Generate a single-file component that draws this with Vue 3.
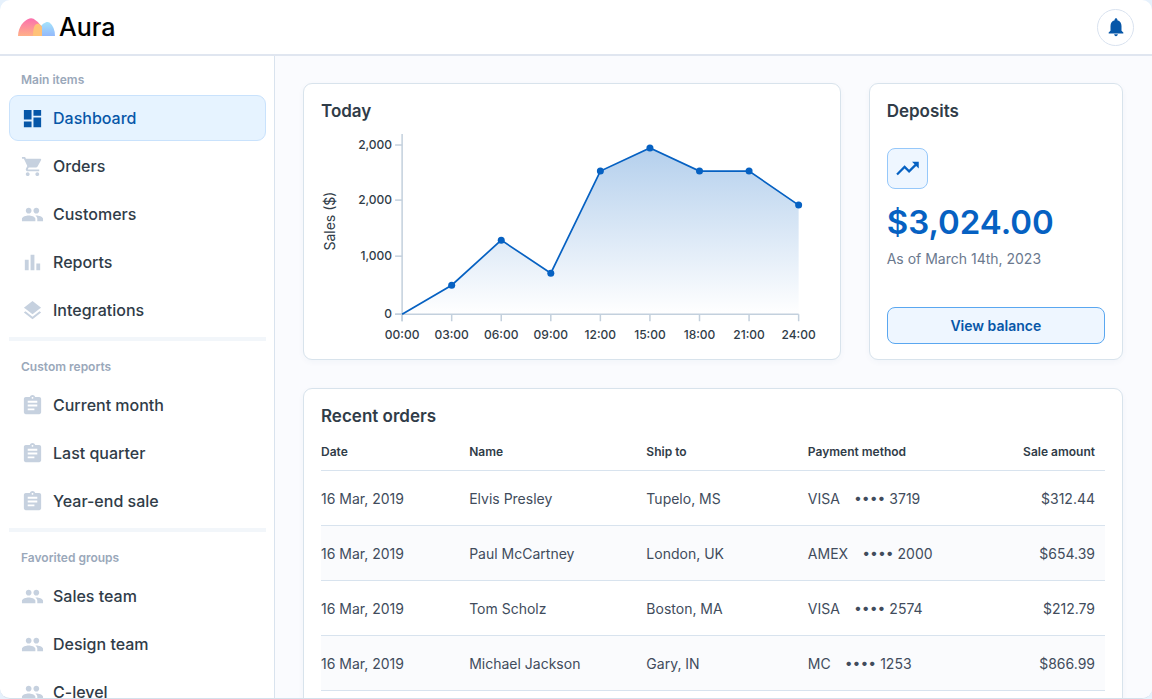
<script setup>
const people = 'M16 11c1.66 0 2.99-1.34 2.99-3S17.66 5 16 5s-3 1.34-3 3 1.34 3 3 3zm-8 0c1.66 0 2.99-1.34 2.99-3S9.66 5 8 5 5 6.34 5 8s1.34 3 3 3zm0 2c-2.33 0-7 1.17-7 3.5V19h14v-2.5c0-2.33-4.67-3.5-7-3.5zm8 0c-.29 0-.62.02-.97.05 1.16.84 1.97 1.97 1.97 3.45V19h6v-2.5c0-2.33-4.67-3.5-7-3.5z'
const clipboard = 'M19 3h-4.18C14.4 1.84 13.3 1 12 1s-2.4.84-2.82 2H5c-1.1 0-2 .9-2 2v14c0 1.1.9 2 2 2h14c1.1 0 2-.9 2-2V5c0-1.1-.9-2-2-2zm-7 0c.55 0 1 .45 1 1s-.45 1-1 1-1-.45-1-1 .45-1 1-1zm2 14H7v-2h7v2zm3-4H7v-2h10v2zm0-4H7V7h10v2z'

const groups = [
  {
    title: 'Main items',
    items: [
      { label: 'Dashboard', icon: 'M3 13h8V3H3v10zm0 8h8v-6H3v6zm10 0h8V11h-8v10zm0-18v6h8V3h-8z', active: true },
      { label: 'Orders', icon: 'M7 18c-1.1 0-1.99.9-1.99 2S5.9 22 7 22s2-.9 2-2-.9-2-2-2zM1 2v2h2l3.6 7.59-1.35 2.45c-.16.28-.25.61-.25.96 0 1.1.9 2 2 2h12v-2H7.42c-.14 0-.25-.11-.25-.25l.03-.12.9-1.63h7.45c.75 0 1.41-.41 1.75-1.03l3.58-6.49A1 1 0 0 0 20 4H5.21l-.94-2H1zm16 16c-1.1 0-1.99.9-1.99 2s.89 2 1.99 2 2-.9 2-2-.9-2-2-2z' },
      { label: 'Customers', icon: people },
      { label: 'Reports', icon: 'M4 9h4v11H4zM10 4h4v16h-4zM16 13h4v7h-4z' },
      { label: 'Integrations', icon: 'M11.99 18.54l-7.37-5.73L3 14.07l9 7 9-7-1.63-1.27-7.38 5.74zM12 16l7.36-5.73L21 9l-9-7-9 7 1.63 1.27L12 16z' },
    ],
  },
  {
    title: 'Custom reports',
    items: [
      { label: 'Current month', icon: clipboard },
      { label: 'Last quarter', icon: clipboard },
      { label: 'Year-end sale', icon: clipboard },
    ],
  },
  {
    title: 'Favorited groups',
    items: [
      { label: 'Sales team', icon: people },
      { label: 'Design team', icon: people },
      { label: 'C-level', icon: people },
    ],
  },
]

const hours = ['00:00', '03:00', '06:00', '09:00', '12:00', '15:00', '18:00', '21:00', '24:00']
const tickX = (i) => 81 + i * 49.5
const yTicks = [
  { label: '2,000', y: 15 },
  { label: '2,000', y: 70 },
  { label: '1,000', y: 126 },
  { label: '0', y: 184 },
]
const values = [184, 155, 110, 143, 41, 18, 41, 41, 75]
const points = values.map((y, i) => ({ x: tickX(i), y }))
const line = points.map((p) => `${p.x},${p.y}`).join(' ')
const area = `${line} ${tickX(8)},184`

const orders = [
  { date: '16 Mar, 2019', name: 'Elvis Presley', ship: 'Tupelo, MS', card: 'VISA', digits: '3719', amount: '$312.44' },
  { date: '16 Mar, 2019', name: 'Paul McCartney', ship: 'London, UK', card: 'AMEX', digits: '2000', amount: '$654.39' },
  { date: '16 Mar, 2019', name: 'Tom Scholz', ship: 'Boston, MA', card: 'VISA', digits: '2574', amount: '$212.79' },
  { date: '16 Mar, 2019', name: 'Michael Jackson', ship: 'Gary, IN', card: 'MC', digits: '1253', amount: '$866.99' },
]
</script>

<template>
  <div class="app">
    <header class="topbar">
      <a href="#" class="brand">
        <svg class="logo" viewBox="0 0 37 18" aria-hidden="true">
          <defs>
            <linearGradient id="pink" x1="0" y1="0" x2="0" y2="1">
              <stop offset="0" stop-color="#fb6fae" />
              <stop offset="1" stop-color="#ffb088" />
            </linearGradient>
            <linearGradient id="sky" x1="0" y1="0" x2="0" y2="1">
              <stop offset="0" stop-color="#a5e3fb" />
              <stop offset="1" stop-color="#93b9fb" />
            </linearGradient>
          </defs>
          <path d="M22 18V9Q25 5 28.500 4.100Q30 3.700 31.500 4.500Q37 9 37 18Z" fill="url(#sky)" />
          <path d="M0 18C.5 9 5 3 11.500 .5Q13.500 -.3 15.500 .8Q21 4 24 9V18Z" fill="url(#pink)" />
          <path d="M15 18C15 9 17 5.700 19.500 5.700C22 5.700 24 8 24 10V18Z" fill="#ffc278" />
        </svg>
        <span>Aura</span>
      </a>
      <button class="bell" type="button" aria-label="Notifications">
        <svg viewBox="0 0 24 24" aria-hidden="true">
          <path d="M12 22c1.100 0 2-.9 2-2h-4c0 1.100.9 2 2 2zm6-6v-5c0-3.070-1.630-5.640-4.500-6.320V4c0-.83-.67-1.500-1.500-1.500s-1.500.67-1.500 1.500v.68C7.640 5.360 6 7.920 6 11v5l-2 2v1h16v-1l-2-2z" />
        </svg>
      </button>
    </header>

    <div class="body">
      <nav class="sidebar">
        <section v-for="group in groups" :key="group.title" class="group">
          <h2>{{ group.title }}</h2>
          <ul>
            <li v-for="item in group.items" :key="item.label">
              <a href="#" :class="['item', { active: item.active }]">
                <svg viewBox="0 0 24 24" aria-hidden="true"><path :d="item.icon" /></svg>
                <span>{{ item.label }}</span>
              </a>
            </li>
          </ul>
        </section>
      </nav>

      <main class="content">
        <section class="card today">
          <h3>Today</h3>
          <svg class="chart" viewBox="0 0 501 214" role="img" aria-label="Sales today">
            <defs>
              <linearGradient id="fill" x1="0" y1="0" x2="0" y2="1">
                <stop offset="0" stop-color="#0661c2" stop-opacity="0.3" />
                <stop offset="1" stop-color="#0661c2" stop-opacity="0" />
              </linearGradient>
            </defs>
            <polygon :points="area" fill="url(#fill)" />
            <g class="axis">
              <path d="M81 4V191M74 184H477" />
              <path v-for="t in yTicks" :key="t.y" :d="`M74 ${t.y}H81`" />
              <path v-for="(h, i) in hours" :key="h" :d="`M${tickX(i)} 184V191`" />
            </g>
            <polyline :points="line" class="line" />
            <circle v-for="p in points.slice(1)" :key="p.x" :cx="p.x" :cy="p.y" r="3.500" class="dot" />
            <g class="ticks">
              <text v-for="t in yTicks" :key="t.y" x="71" :y="t.y + 4" text-anchor="end">{{ t.label }}</text>
              <text v-for="(h, i) in hours" :key="h" :x="tickX(i)" y="209" text-anchor="middle">{{ h }}</text>
            </g>
            <text class="axis-title" transform="translate(14 91) rotate(-90)" text-anchor="middle">Sales ($)</text>
          </svg>
        </section>

        <section class="card deposits">
          <h3>Deposits</h3>
          <div class="trend">
            <svg viewBox="0 0 24 24" aria-hidden="true">
              <path d="M16 6l2.290 2.290-4.880 4.880-4-4L2 16.590 3.410 18l6-6 4 4 6.300-6.290L22 12V6z" />
            </svg>
          </div>
          <p class="amount">$3,024.00</p>
          <p class="asof">As of March 14th, 2023</p>
          <button class="view" type="button">View balance</button>
        </section>

        <section class="card orders">
          <h3>Recent orders</h3>
          <table>
            <thead>
              <tr>
                <th class="c-date">Date</th>
                <th class="c-name">Name</th>
                <th class="c-ship">Ship to</th>
                <th class="c-pay">Payment method</th>
                <th class="num">Sale amount</th>
              </tr>
            </thead>
            <tbody>
              <tr v-for="o in orders" :key="o.name">
                <td>{{ o.date }}</td>
                <td>{{ o.name }}</td>
                <td>{{ o.ship }}</td>
                <td><span class="brand-name">{{ o.card }}</span>•••• {{ o.digits }}</td>
                <td class="num">{{ o.amount }}</td>
              </tr>
            </tbody>
          </table>
        </section>
      </main>
    </div>
  </div>
</template>

<style>
body {
  background: #e6f1fc;
}
</style>

<style scoped>
.app {
  display: flex;
  flex-direction: column;
  height: 100vh;
  box-sizing: border-box;
  overflow: hidden;
  border-bottom: 1px solid #d5e0ec;
  border-radius: 10px;
  background: #fff;
  color: #303c48;
  font-family: Inter, "Liberation Sans", sans-serif;
}
h2, h3, p, ul {
  margin: 0;
  padding: 0;
}
ul {
  list-style: none;
}
a {
  color: inherit;
  text-decoration: none;
}
button {
  font-family: inherit;
  cursor: pointer;
}
.topbar {
  display: flex;
  flex: none;
  align-items: center;
  justify-content: space-between;
  box-sizing: border-box;
  height: 56px;
  padding: 0 18px;
  border-bottom: 2px solid #e0e6f0;
}
.brand {
  display: flex;
  align-items: center;
  gap: 4px;
  color: #000;
  font-size: 25px;
  font-weight: 500;
  line-height: 32px;
}
.logo {
  width: 37px;
  height: 18px;
}
.bell {
  display: flex;
  align-items: center;
  justify-content: center;
  width: 37px;
  height: 37px;
  padding: 0;
  border: 1px solid #d9e2ef;
  border-radius: 50%;
  background: #fff;
}
.bell svg {
  width: 22px;
  height: 22px;
  fill: #0757a8;
}
.body {
  display: flex;
  flex: 1;
  min-height: 0;
}
.sidebar {
  flex: none;
  box-sizing: border-box;
  width: 275px;
  padding: 0 8px 0 9px;
  overflow: hidden;
  border-right: 1px solid #d9e3ee;
}
.group {
  padding: 16px 0 4px;
}
.group + .group {
  padding-top: 18px;
  border-top: 4px solid #f2f6fa;
}
.group h2 {
  margin: 0 12px 7px;
  color: #9aa8ba;
  font-size: 12px;
  font-weight: 600;
  line-height: 16px;
}
.group ul {
  display: flex;
  flex-direction: column;
  gap: 2px;
}
.item {
  display: flex;
  align-items: center;
  gap: 9px;
  box-sizing: border-box;
  height: 46px;
  padding: 0 11px;
  border: 1px solid transparent;
  border-radius: 9px;
  font-size: 16px;
  font-weight: 500;
}
.item svg {
  width: 23px;
  height: 23px;
  fill: #c6d1df;
}
.item.active {
  border-color: #c9e2fc;
  background: #e6f3ff;
  color: #0757a8;
}
.item.active svg {
  fill: #0757a8;
}
.content {
  display: grid;
  flex: 1;
  grid-template-columns: minmax(0, 537fr) minmax(0, 254fr);
  grid-template-rows: auto auto;
  align-content: start;
  gap: 28px;
  min-width: 0;
  padding: 27px 29px 0 28px;
  overflow: hidden;
  background: #fafbfe;
}
.card {
  box-sizing: border-box;
  padding: 17px 17px 15px;
  border: 1px solid #d8e3ec;
  border-radius: 9px;
  background: #fff;
  box-shadow: 0 2px 6px rgba(30, 70, 120, 0.04);
}
.card h3 {
  font-size: 17px;
  font-weight: 600;
  line-height: 20px;
}
.chart {
  display: block;
  width: 100%;
  margin-top: 9px;
}
.axis {
  fill: none;
  stroke: #c3d0dd;
  stroke-width: 1.500;
}
.line {
  fill: none;
  stroke: #0661c2;
  stroke-width: 1.700;
}
.dot {
  fill: #0661c2;
}
.ticks {
  fill: #303c48;
  font-size: 12px;
  font-weight: 500;
}
.axis-title {
  fill: #303c48;
  font-size: 14px;
}
.deposits {
  display: flex;
  flex-direction: column;
}
.trend {
  display: flex;
  align-items: center;
  justify-content: center;
  box-sizing: border-box;
  width: 41px;
  height: 41px;
  margin-top: 27px;
  border: 1px solid #96c8fa;
  border-radius: 8px;
  background: #eef6ff;
}
.trend svg {
  width: 27px;
  height: 27px;
  fill: #0661c2;
}
.amount {
  margin-top: 12px;
  color: #0661c2;
  font-size: 33px;
  font-weight: 600;
  line-height: 42px;
}
.asof {
  margin-top: 6px;
  color: #6b798e;
  font-size: 14px;
  line-height: 20px;
}
.view {
  height: 37px;
  margin-top: auto;
  border: 1px solid #5aa7f0;
  border-radius: 8px;
  background: #eef6ff;
  color: #0757a8;
  font-size: 14px;
  font-weight: 600;
}
.orders {
  grid-column: 1 / -1;
  height: 360px;
}
table {
  width: 100%;
  margin-top: 7px;
  border-collapse: separate;
  border-spacing: 0;
  table-layout: fixed;
}
th, td {
  padding: 0;
  border-bottom: 1px solid #d8e3ee;
  text-align: left;
}
th {
  height: 37px;
  font-size: 12px;
  font-weight: 600;
}
td {
  height: 54px;
  color: #414c5c;
  font-size: 14px;
  font-weight: 400;
}
tbody tr:nth-child(even) {
  background: #fafbfd;
}
.c-date {
  width: 18.9%;
}
.c-name {
  width: 22.6%;
}
.c-ship {
  width: 20.6%;
}
.c-pay {
  width: 19%;
}
.num {
  padding-right: 10px;
  text-align: right;
}
.brand-name {
  margin-right: 14px;
}
</style>
